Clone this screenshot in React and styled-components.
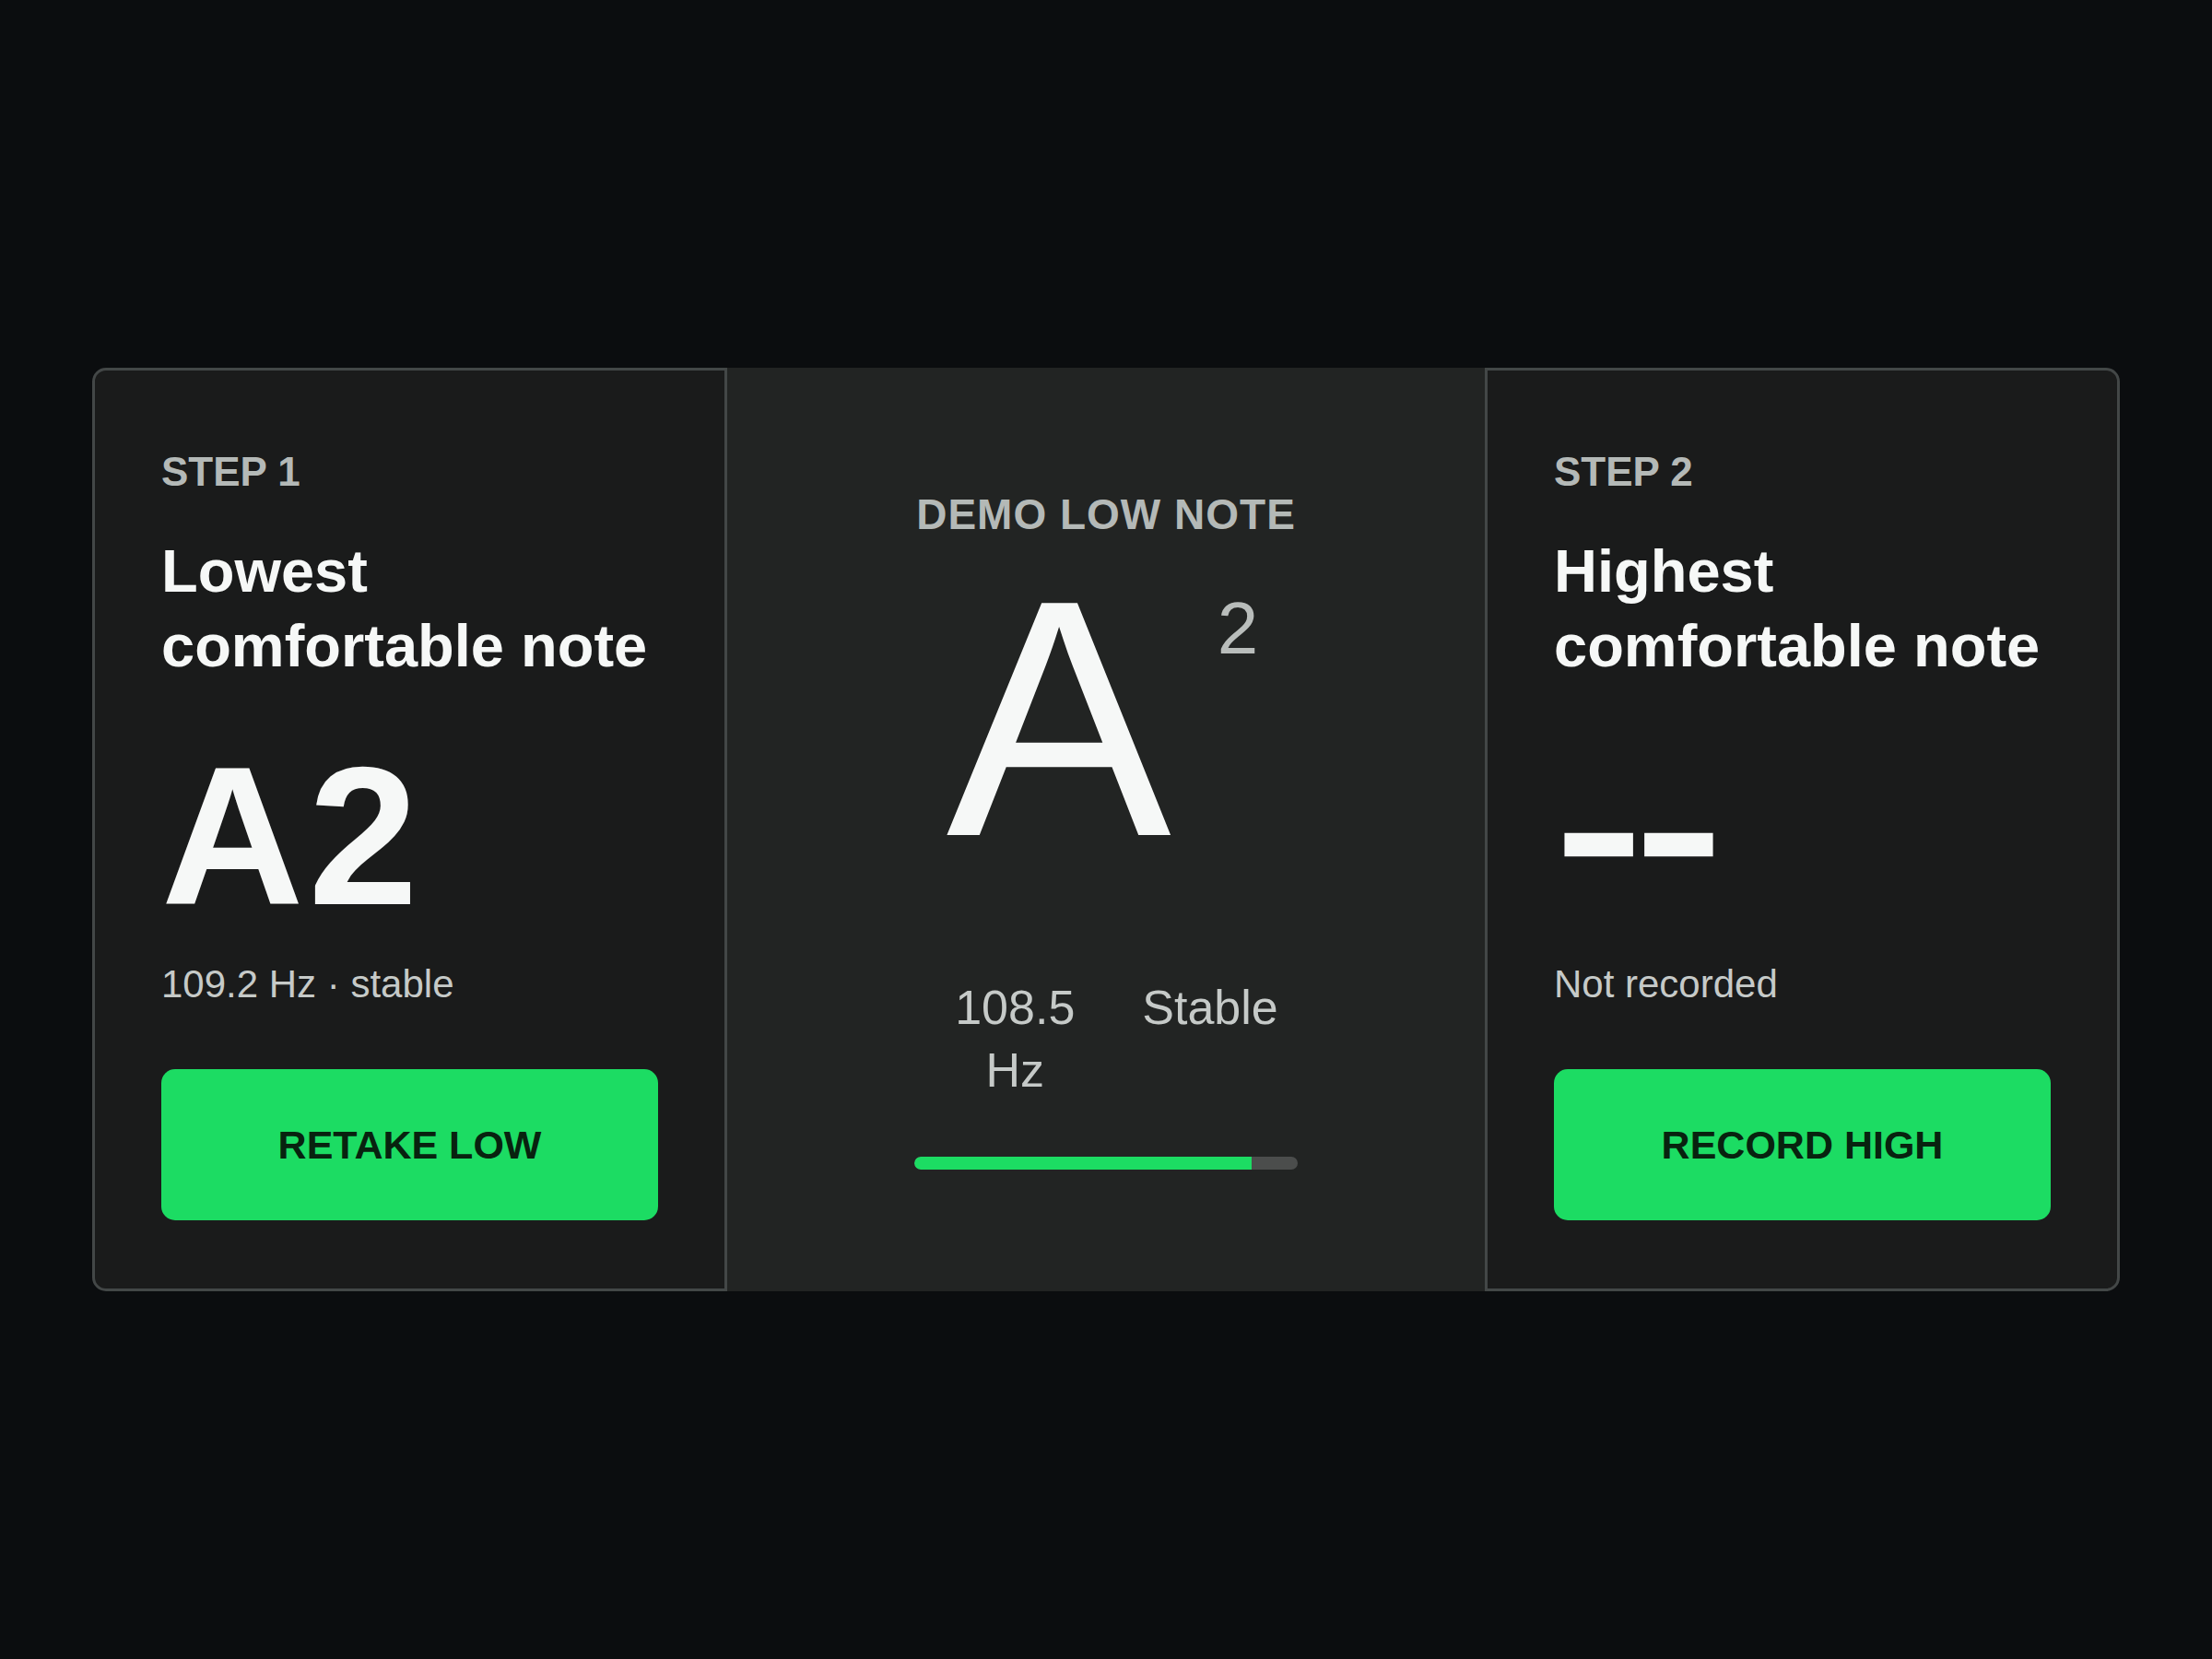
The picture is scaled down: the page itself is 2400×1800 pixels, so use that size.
import styled, { createGlobalStyle } from "styled-components";

const GlobalStyle = createGlobalStyle`
  html, body {
    margin: 0;
    padding: 0;
    background: #0b0d0f;
  }
  body {
    font-family: "Liberation Sans", Arial, sans-serif;
  }
`;

const Page = styled.div`
  min-height: 100vh;
  display: flex;
  align-items: center;
  justify-content: center;
`;

const Panel = styled.div`
  display: grid;
  grid-template-columns: 689px 822px 689px;
  height: 1002px;
`;

const StepCard = styled.section`
  display: flex;
  flex-direction: column;
  align-items: flex-start;
  background: #1a1b1b;
  border: 3px solid #434747;
  border-radius: ${(p) => (p.$side === "left" ? "15px 0 0 15px" : "0 15px 15px 0")};
  padding: 84px 72px 73px;
`;

const StepLabel = styled.div`
  font-size: 44px;
  line-height: 1.2;
  font-weight: 700;
  color: #b4b9b7;
`;

const StepTitle = styled.h2`
  margin: 40px 0 0;
  font-size: 65px;
  line-height: 81px;
  font-weight: 700;
  color: #f6f8f7;
`;

const NoteValue = styled.div`
  margin-top: 60px;
  height: 212px;
  font-size: 214px;
  line-height: 212px;
  font-weight: 700;
  letter-spacing: 5px;
  color: #f6f8f7;
  white-space: nowrap;
  /* the empty placeholder is drawn as two wide bars */
  ${(p) =>
    p.$empty &&
    `
    letter-spacing: -8px;
    transform: translateY(-9px) scaleX(1.37);
    transform-origin: left center;
  `}
`;

const NoteMeta = styled.div`
  margin-top: 28px;
  font-size: 42px;
  line-height: 1.3;
  color: #c6cac8;
`;

const ActionButton = styled.button`
  margin-top: 65px;
  width: 100%;
  height: 164px;
  border: none;
  border-radius: 15px;
  background: #1cdc63;
  color: #08220f;
  font-family: inherit;
  font-size: 43px;
  font-weight: 700;
  cursor: pointer;
`;

const DemoPanel = styled.section`
  display: flex;
  flex-direction: column;
  align-items: center;
  justify-content: center;
  background: #222423;
`;

const DemoLabel = styled.div`
  font-size: 46px;
  line-height: 1.2;
  font-weight: 700;
  letter-spacing: 1px;
  color: #b4b9b7;
`;

const BigNote = styled.div`
  display: flex;
  align-items: flex-start;
  margin-top: 12px;
  margin-right: 8px;
`;

const NoteLetter = styled.span`
  display: block;
  font-size: 366px;
  line-height: 364px;
  color: #f6f8f7;
`;

const Octave = styled.span`
  display: block;
  margin: 44px 0 0 50px;
  font-size: 80px;
  line-height: 1;
  color: #b9bdbb;
`;

const Readout = styled.div`
  display: flex;
  align-items: flex-start;
  gap: 58px;
  margin-top: 97px;
  padding-left: 8px;
  font-size: 52px;
  line-height: 68px;
  color: #c6cac8;
`;

const Freq = styled.div`
  width: 160px;
  text-align: center;
`;

const Status = styled.div``;

const Meter = styled.div`
  margin-top: 60px;
  width: 416px;
  height: 14px;
  border-radius: 7px;
  background: #4b4d4c;
  overflow: hidden;
`;

const MeterFill = styled.div`
  height: 100%;
  background: #1cdc63;
  border-radius: 7px 0 0 7px;
`;

const steps = {
  low: {
    label: "STEP 1",
    title: ["Lowest", "comfortable note"],
    value: "A2",
    meta: "109.2 Hz · stable",
    action: "RETAKE LOW",
  },
  high: {
    label: "STEP 2",
    title: ["Highest", "comfortable note"],
    value: null,
    meta: "Not recorded",
    action: "RECORD HIGH",
  },
};

const Step = ({ side, step }) => (
  <StepCard $side={side}>
    <StepLabel>{step.label}</StepLabel>
    <StepTitle>
      {step.title[0]}
      <br />
      {step.title[1]}
    </StepTitle>
    <NoteValue $empty={!step.value}>{step.value || "--"}</NoteValue>
    <NoteMeta>{step.meta}</NoteMeta>
    <ActionButton>{step.action}</ActionButton>
  </StepCard>
);

const App = () => {
  const stability = 88;
  return (
    <>
      <GlobalStyle />
      <Page>
        <Panel>
          <Step side="left" step={steps.low} />
          <DemoPanel>
            <DemoLabel>DEMO LOW NOTE</DemoLabel>
            <BigNote>
              <NoteLetter>A</NoteLetter>
              <Octave>2</Octave>
            </BigNote>
            <Readout>
              <Freq>108.5 Hz</Freq>
              <Status>Stable</Status>
            </Readout>
            <Meter>
              <MeterFill style={{ width: `${stability}%` }} />
            </Meter>
          </DemoPanel>
          <Step side="right" step={steps.high} />
        </Panel>
      </Page>
    </>
  );
};

export default App;
